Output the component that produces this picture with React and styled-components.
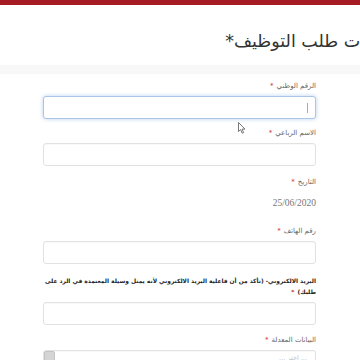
import React from 'react';
import styled, { createGlobalStyle } from 'styled-components';

const GlobalStyle = createGlobalStyle`
  html, body {
    margin: 0;
    padding: 0;
    background: #fff;
    overflow: hidden;
  }
  body {
    font-family: 'DejaVu Sans', 'Noto Sans', sans-serif;
  }
`;

const Page = styled.div`
  position: relative;
  direction: rtl;
  width: 360px;
  height: 360px;
  overflow: hidden;
`;

const TopBar = styled.div`
  height: 5px;
  background: #a51c24;
`;

const Header = styled.header`
  height: 60px;
  display: flex;
  align-items: center;
  margin-right: -26px;
  padding-top: 11px;
  box-sizing: border-box;
`;

const Title = styled.h1`
  margin: 0;
  font-size: 17.5px;
  font-weight: 400;
  color: #333;
  white-space: nowrap;
`;

const Strip = styled.div`
  height: 9px;
  background: #f8f8f8;
`;

const Form = styled.form`
  padding: 6px 44px 0 43px;
  display: flex;
  flex-direction: column;
`;

const Field = styled.div`
  display: flex;
  flex-direction: column;
  margin-bottom: ${(p) => p.$gap || 8}px;
`;

const Label = styled.label`
  font-size: ${(p) => (p.$strong ? 5.9 : 7)}px;
  line-height: ${(p) => (p.$strong ? 11 : 12)}px;
  font-weight: ${(p) => (p.$strong ? 700 : 400)};
  color: ${(p) => (p.$strong ? '#222' : '#666')};
  margin-bottom: 4px;
`;

const Req = styled.span`
  color: #c9302c;
  margin-right: 3px;
`;

const Input = styled.div`
  position: relative;
  height: 23px;
  box-sizing: border-box;
  border: 1px solid ${(p) => (p.$focus ? '#a9c6e6' : '#e2e2e2')};
  border-radius: 3px;
  background: #fff;
  box-shadow: ${(p) =>
    p.$focus ? '0 0 4px rgba(102, 155, 220, 0.45)' : 'inset 0 1px 1px rgba(0,0,0,0.03)'};
`;

const Caret = styled.span`
  position: absolute;
  right: 7px;
  top: 6px;
  width: 1px;
  height: 10px;
  background: #aaa;
`;

const DateText = styled.div`
  font-family: 'Liberation Serif', Georgia, serif;
  font-size: 9.5px;
  color: #777;
  line-height: 14px;
  padding-top: 4px;
`;

const Placeholder = styled.span`
  position: absolute;
  right: 8px;
  top: 3px;
  font-size: 6.5px;
  color: #bbb;
`;

const ScrollThumb = styled.span`
  position: absolute;
  left: 0;
  top: 0;
  width: 9px;
  height: 12px;
  background: #d5d5d5;
  border: 1px solid #c4c4c4;
  border-radius: 2px;
`;

const Pointer = styled.svg`
  position: absolute;
  left: 238px;
  top: 122px;
  width: 8px;
  height: 12px;
`;

export default function App() {
  return (
    <Page>
      <GlobalStyle />
      <TopBar />
      <Header>
        <Title>بيانات طلب التوظيف*</Title>
      </Header>
      <Strip />
      <Form>
        <Field>
          <Label>
            الرقم الوطني<Req>*</Req>
          </Label>
          <Input $focus>
            <Caret />
          </Input>
        </Field>
        <Field $gap={10}>
          <Label>
            الاسم الرباعي<Req>*</Req>
          </Label>
          <Input />
        </Field>
        <Field $gap={15}>
          <Label>
            التاريخ<Req>*</Req>
          </Label>
          <DateText>25/06/2020</DateText>
        </Field>
        <Field $gap={12}>
          <Label>
            رقم الهاتف<Req>*</Req>
          </Label>
          <Input />
        </Field>
        <Field $gap={9}>
          <Label $strong>
            البريد الالكتروني- (تأكد من أن فاعلية البريد الالكتروني لأنه يمثل وسيلة المعتمدة في الرد على طلبك)
            <Req>*</Req>
          </Label>
          <Input />
        </Field>
        <Field>
          <Label>
            البيانات المعدلة<Req>*</Req>
          </Label>
          <Input>
            <Placeholder>... اختر ...</Placeholder>
            <ScrollThumb />
          </Input>
        </Field>
      </Form>
      <Pointer viewBox="0 0 8 12">
        <path d="M0.5 0.5 L0.5 9.5 L2.6 7.6 L4.2 11.2 L5.6 10.6 L4.1 7.1 L7 7.1 Z" fill="#fff" stroke="#555" strokeWidth="0.8" />
      </Pointer>
    </Page>
  );
}
